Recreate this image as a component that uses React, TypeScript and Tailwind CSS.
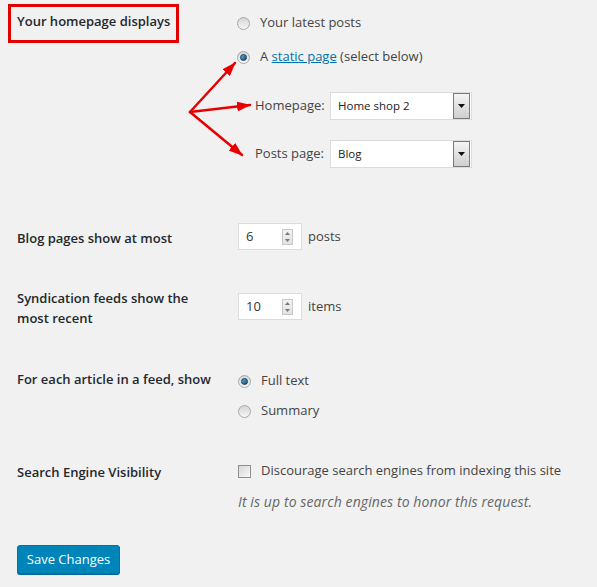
import React from 'react';

const Radio: React.FC<{ checked?: boolean }> = ({ checked }) => (
  <span className="w-[13px] h-[13px] rounded-full border border-[#a8a8a8] bg-gradient-to-b from-[#d6d6d6] to-[#f6f6f6] flex items-center justify-center shrink-0">
    {checked && (
      <span className="w-[7px] h-[7px] rounded-full bg-gradient-to-br from-[#5cb3e0] to-[#0a4f7a] border border-[#0c3b5a]" />
    )}
  </span>
);

const Select: React.FC<{ value: string }> = ({ value }) => (
  <div className="w-[142px] h-[28px] bg-white border border-[#dcdcdc] flex items-center justify-between pl-[7px] pr-[1px]">
    <span className="text-[11.5px] text-[#222]">{value}</span>
    <span className="w-[17px] h-[26px] border border-[#7a7a7a] bg-gradient-to-b from-[#f4f4f4] to-[#cfcfcf] flex items-center justify-center">
      <svg width="7" height="4" viewBox="0 0 7 4">
        <path d="M0 0 L7 0 L3.5 4 Z" fill="#111" />
      </svg>
    </span>
  </div>
);

const NumberInput: React.FC<{ value: string }> = ({ value }) => (
  <div className="w-[64px] h-[27px] bg-white border border-[#dcdcdc] flex items-center justify-between pl-[7px] pr-[8px]">
    <span className="text-[13px] text-[#333]">{value}</span>
    <span className="w-[11px] h-[16px] border border-[#c8c8c8] bg-gradient-to-b from-[#f2f2f2] to-[#e2e2e2] flex flex-col items-center justify-around">
      <svg width="5" height="3" viewBox="0 0 5 3">
        <path d="M0 3 L5 3 L2.5 0 Z" fill="#6a7b8e" />
      </svg>
      <svg width="5" height="3" viewBox="0 0 5 3">
        <path d="M0 0 L5 0 L2.5 3 Z" fill="#6a7b8e" />
      </svg>
    </span>
  </div>
);

export default function App() {
  return (
    <div
      className="relative w-[597px] h-[587px] bg-[#f1f1f1] text-[#444] overflow-hidden pl-[17px]"
      style={{ fontFamily: '"Open Sans", "Noto Sans", Arial, sans-serif' }}
    >
      {/* Front page */}
      <div className="flex">
        <div className="w-[221px] pt-[4px]">
          <div className="-ml-[9px] w-[171px] h-[39px] border-[3px] border-[#e00000] pl-[6px] pt-[1px]">
            <span className="text-[13px] leading-[20px] font-semibold text-[#23282d]">Your homepage displays</span>
          </div>
        </div>
        <div className="pt-[13px] text-[13px]">
          <div className="flex items-center h-[20px] gap-[10px] -ml-[1px]">
            <Radio />
            <span>Your latest posts</span>
          </div>
          <div className="flex items-center h-[20px] gap-[10px] mt-[14px] -ml-[1px]">
            <Radio checked />
            <span>
              A <a className="text-[#0073aa] underline">static page</a> (select below)
            </span>
          </div>
          <div className="flex items-center mt-[25px] pl-[17px]">
            <span className="w-[75px]">Homepage:</span>
            <Select value="Home shop 2" />
          </div>
          <div className="flex items-center mt-[20px] pl-[17px]">
            <span className="w-[75px]">Posts page:</span>
            <Select value="Blog" />
          </div>
        </div>
      </div>

      {/* Blog pages */}
      <div className="flex items-center mt-[55px]">
        <div className="w-[221px] text-[13px] leading-[20px] pt-[2px] font-semibold text-[#23282d]">Blog pages show at most</div>
        <NumberInput value="6" />
        <span className="ml-[6px] text-[13px]">posts</span>
      </div>

      {/* Syndication */}
      <div className="flex mt-[38px]">
        <div className="w-[221px] text-[13px] leading-[20px] font-semibold text-[#23282d] pr-[30px]">
          Syndication feeds show the most recent
        </div>
        <div className="flex items-center mt-[5px] h-[27px]">
          <NumberInput value="10" />
          <span className="ml-[6px] text-[13px]">items</span>
        </div>
      </div>

      {/* Feed article */}
      <div className="flex mt-[41px]">
        <div className="w-[221px] text-[13px] leading-[20px] font-semibold text-[#23282d]">
          For each article in a feed, show
        </div>
        <div className="pt-[2px] text-[13px]">
          <div className="flex items-center h-[20px] gap-[10px]">
            <Radio checked />
            <span>Full text</span>
          </div>
          <div className="flex items-center h-[20px] gap-[10px] mt-[10px]">
            <Radio />
            <span>Summary</span>
          </div>
        </div>
      </div>

      {/* Search engine */}
      <div className="flex mt-[41px]">
        <div className="w-[221px] text-[13px] leading-[20px] font-semibold text-[#23282d]">Search Engine Visibility</div>
        <div className="-mt-[1px] text-[13px]">
          <div className="flex items-center h-[20px] gap-[10px]">
            <span className="w-[13px] h-[13px] border border-[#8f8f8f] bg-gradient-to-br from-[#d8d8d8] to-[#f8f8f8] shrink-0" />
            <span>Discourage search engines from indexing this site</span>
          </div>
          <div className="mt-[11px] h-[20px] leading-[20px] italic text-[14px] tracking-[0.1px] text-[#666]">
            It is up to search engines to honor this request.
          </div>
        </div>
      </div>

      <button className="mt-[33px] w-[103px] h-[29px] rounded-[3px] bg-[#0085ba] border border-[#0073aa] shadow-[0_1px_0_#006799] text-white text-[13px]">
        Save Changes
      </button>

      {/* Annotation arrows */}
      <svg className="absolute inset-0 pointer-events-none" width="597" height="587">
        <defs>
          <marker id="ah" markerUnits="userSpaceOnUse" markerWidth="14" markerHeight="10" refX="13" refY="5" orient="auto">
            <path d="M0 0 L14 5 L0 10 Z" fill="#e80000" />
          </marker>
        </defs>
        <g stroke="#e80000" strokeWidth="2.5" strokeLinecap="round">
          <line x1="190" y1="112" x2="235" y2="63" markerEnd="url(#ah)" />
          <line x1="190" y1="112" x2="250" y2="105" markerEnd="url(#ah)" />
          <line x1="190" y1="112" x2="242" y2="155" markerEnd="url(#ah)" />
        </g>
      </svg>
    </div>
  );
}
